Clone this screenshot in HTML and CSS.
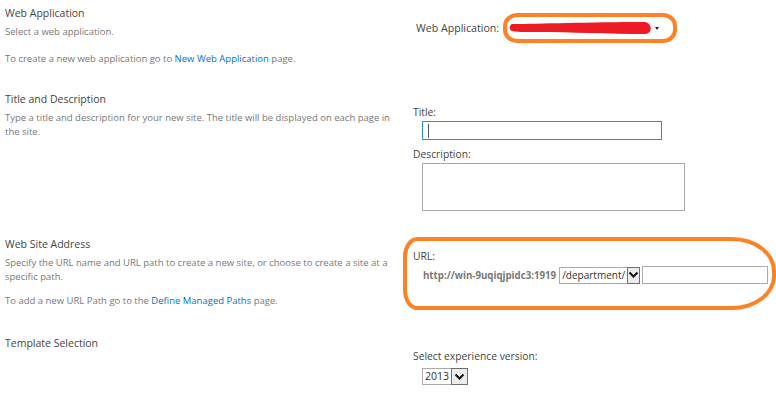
FILE: index.html
```html
<!DOCTYPE html>
<html lang="en">
<head>
    <meta charset="UTF-8">
    <meta name="viewport" content="width=device-width, initial-scale=1.0">
    <title>Create Site Collection</title>
    <link rel="stylesheet" href="styles.css">
</head>
<body>
    <div class="form">
        <div class="section first">
            <div class="info">
                <h3>Web Application</h3>
                <p class="desc">Select a web application.</p>
                <p class="desc gap">To create a new web application go to <a href="#">New Web Application</a> page.</p>
            </div>
            <div class="field">
                <div class="webapp-row">
                    <span class="label">Web Application:</span>
                    <span class="mark small">
                        <svg class="scribble" width="144" height="14" viewBox="0 0 144 14">
                            <path d="M3 4 L5 10" stroke="#8a6ad8" stroke-width="1" fill="none"/>
                            <path d="M3 3 C 30 3, 80 1, 136 1 C 143 2, 144 12, 137 13 C 100 13, 60 11, 30 11 C 15 11, 6 11, 3 10 C 0 9, 0 4, 3 3 Z" fill="#ed1c24"/>
                        </svg>
                        <span class="caret"></span>
                    </span>
                </div>
            </div>
        </div>

        <div class="section">
            <div class="info">
                <h3>Title and Description</h3>
                <p class="desc">Type a title and description for your new site. The title will be displayed on each page in the site.</p>
            </div>
            <div class="field">
                <div class="label">Title:</div>
                <div class="textbox focused"><span class="cursor"></span></div>
                <div class="label desc-label">Description:</div>
                <div class="textarea"></div>
            </div>
        </div>

        <div class="section">
            <div class="info">
                <h3>Web Site Address</h3>
                <p class="desc">Specify the URL name and URL path to create a new site, or choose to create a site at a specific path.</p>
                <p class="desc gap-sm">To add a new URL Path go to the <a href="#">Define Managed Paths</a> page.</p>
            </div>
            <div class="field">
                <div class="mark big">
                    <div class="label">URL:</div>
                    <div class="url-row">
                        <span class="host">http://win-9uqiqjpidc3:1919</span>
                        <span class="select path">
                            <span class="select-text">/department/</span>
                            <span class="select-btn"><svg width="11" height="8" viewBox="0 0 11 8"><path d="M1.5 1.5 L5.5 5.5 L9.5 1.5" stroke="#111" stroke-width="2" fill="none"/></svg></span>
                        </span>
                        <span class="url-input"></span>
                    </div>
                </div>
            </div>
        </div>

        <div class="section">
            <div class="info">
                <h3>Template Selection</h3>
            </div>
            <div class="field">
                <div class="label version-label">Select experience version:</div>
                <span class="select version">
                    <span class="select-text">2013</span>
                    <span class="select-btn"><svg width="11" height="8" viewBox="0 0 11 8"><path d="M1.5 1.5 L5.5 5.5 L9.5 1.5" stroke="#111" stroke-width="2" fill="none"/></svg></span>
                </span>
            </div>
        </div>
    </div>
</body>
</html>
```

FILE: styles.css
```css
    body {
        margin: 0;
        background: #fff;
        font-family: "Open Sans", "Noto Sans", sans-serif;
        color: #444;
        width: 776px;
        overflow: hidden;
}
    .section {
        display: grid;
        grid-template-columns: 408px 368px;
        padding: 5px 0 20px;
    }
    .info {
        padding-left: 5px;
    }
    .info h3 {
        margin: 0;
        font-size: 10.5px;
        font-weight: normal;
        line-height: 16px;
        color: #444;
    }
    .desc {
        margin: 4px 0 0;
        font-size: 9.5px;
        line-height: 14px;
        color: #777;
        padding-right: 10px;
    }
    .desc.gap {
        margin-top: 13px;
    }
    .desc.gap-sm {
        margin-top: 10px;
    }
    .desc a {
        color: #0072c6;
        text-decoration: none;
    }
    .field {
        padding-left: 5px;
    }
    .label {
        font-size: 10.3px;
        line-height: 14px;
        color: #444;
        margin-top: 14px;
    }

    /* web application picker */
    .webapp-row {
        display: flex;
        align-items: center;
        margin-top: 8px;
        margin-left: 3px;
    }
    .webapp-row .label {
        margin: 0;
        font-size: 10.6px;
    }
    .mark {
        border: 4px solid #fe8224;
    }
    .mark.small {
        display: flex;
        align-items: center;
        width: 166px;
        height: 22px;
        margin-left: 4px;
        border-radius: 14px / 13px;
        box-sizing: content-box;
    }
    .scribble {
        margin-left: 2px;
    }
    .caret {
        width: 0;
        height: 0;
        margin-left: 2px;
        border-left: 2.5px solid transparent;
        border-right: 2.5px solid transparent;
        border-top: 3px solid #222;
    }

    /* text inputs */
    .textbox {
        margin: 2px 0 0 9px;
        width: 238px;
        height: 17px;
        border: 1px solid #ababab;
        display: flex;
        align-items: center;
    }
    .textbox.focused {
        border-color: #2a8dd4;
    }
    .cursor {
        width: 1px;
        height: 14px;
        margin-left: 5px;
        background: #555;
    }
    .desc-label {
        margin-top: 7px;
    }
    .textarea {
        margin: 2px 0 0 9px;
        width: 261px;
        height: 46px;
        border: 1px solid #ababab;
    }

    /* url block */
    .mark.big {
        margin: 1px 0 0 -10px;
        padding: 8px 0 22px 6px;
        border-radius: 14px 44px 44px 14px / 20px 34px 34px 20px;
    }
    .mark.big .label {
        margin: 0;
    }
    .url-row {
        display: flex;
        align-items: center;
        margin: 3px 0 0 10px;
    }
    .host {
        font-size: 9.7px;
        font-weight: bold;
        color: #777;
        margin-right: 3px;
    }
    .select {
        display: inline-flex;
        height: 17px;
        border: 1px solid #ababab;
        box-sizing: border-box;
        background: #fff;
    }
    .select-text {
        font-size: 10px;
        line-height: 15px;
        color: #333;
        padding: 0 2px 0 2px;
    }
    .select-btn {
        display: flex;
        align-items: center;
        justify-content: center;
        width: 15px;
        background: #ececec;
        border: 1px solid #707070;
        margin: -1px -1px -1px 0;
    }
    .path {
        width: 80px;
    }
    .path .select-text {
        flex: 1;
    }
    .url-input {
        width: 124px;
        height: 16px;
        margin-left: 3px;
        border: 1px solid #ababab;
    }

    /* template */
    .version-label {
        margin-top: 14px;
    }
    .select.version {
        margin: 5px 0 0 9px;
        width: 46px;
    }
    .version .select-text {
        flex: 1;
        font-size: 10.5px;
    }
```
